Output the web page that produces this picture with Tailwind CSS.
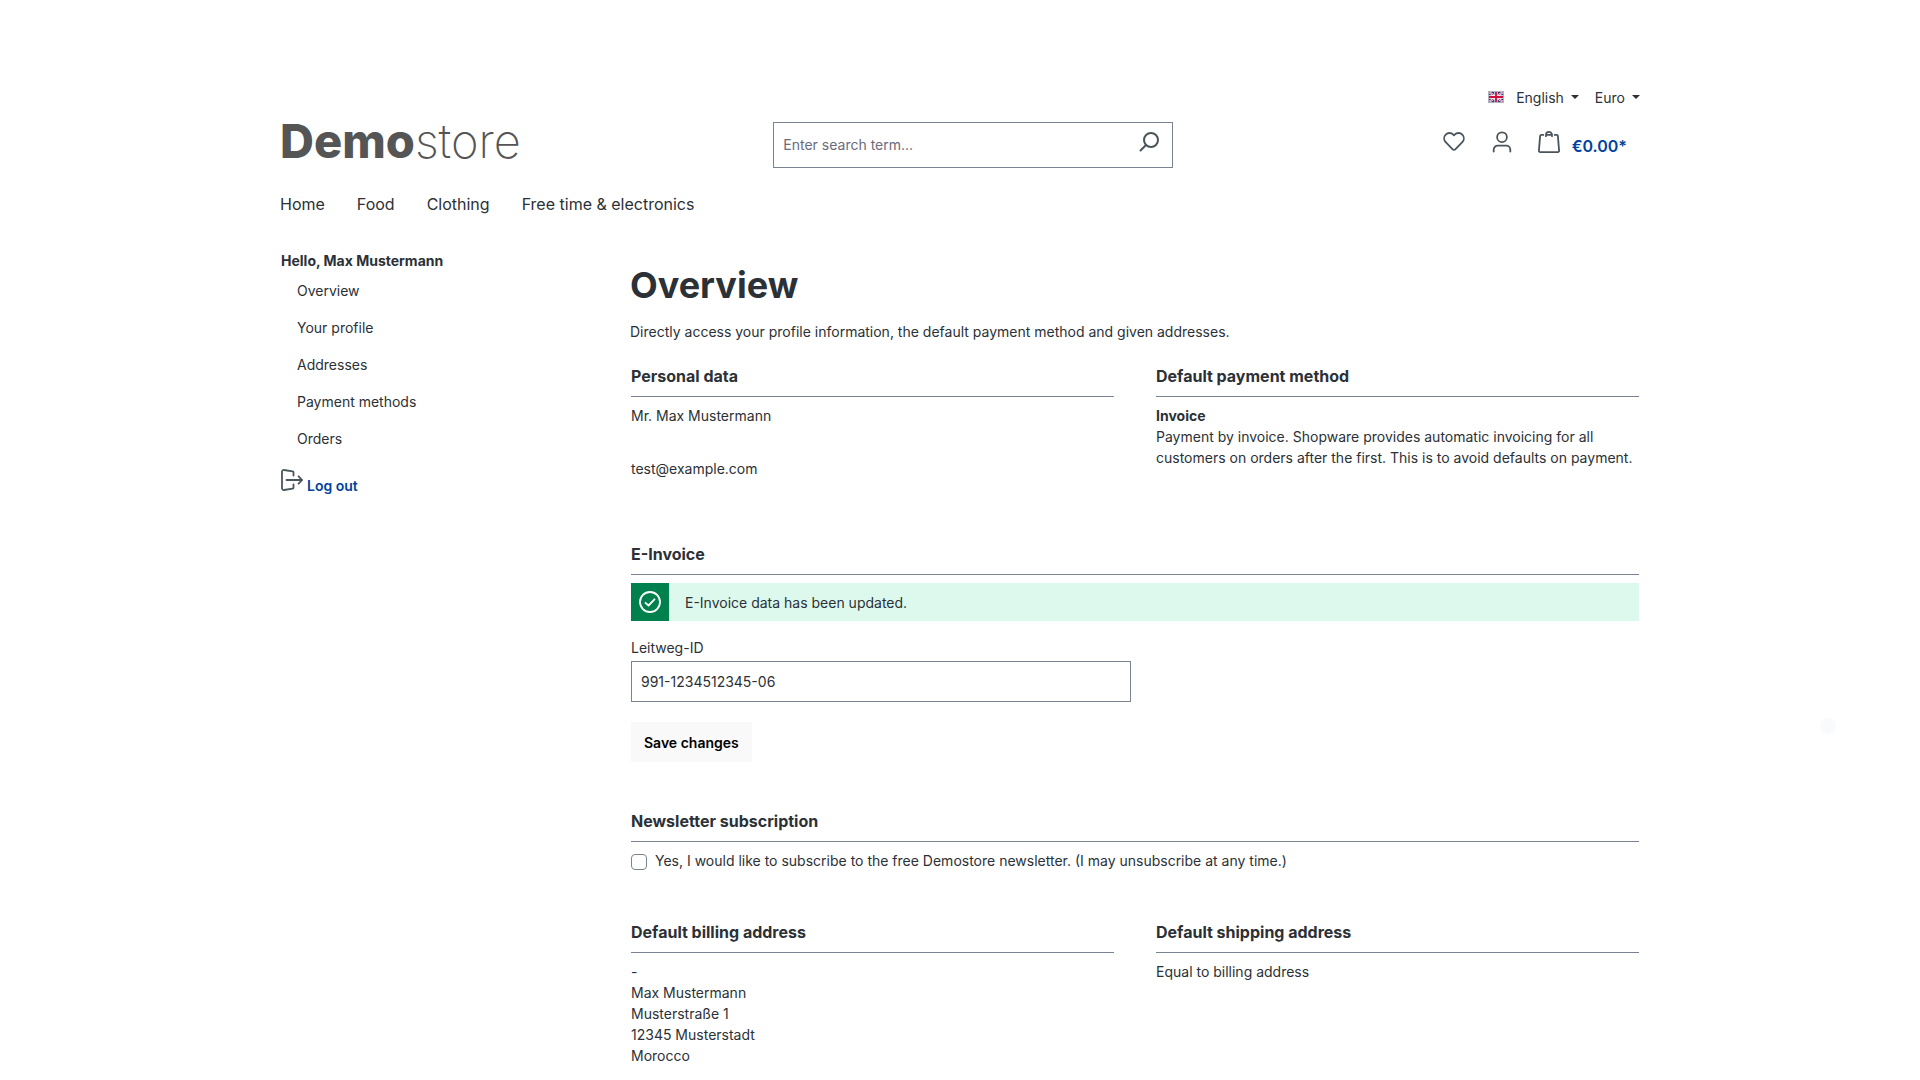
<!DOCTYPE html>
<html lang="en-GB">
<head>
    <meta charset="UTF-8">
    <meta name="viewport" content="width=device-width, initial-scale=1.0">
    <title>Overview | Demostore</title>
    <script src="https://cdn.jsdelivr.net/npm/@tailwindcss/browser@4"></script>
</head>
<body class="min-h-screen overflow-x-hidden bg-white font-['Inter',sans-serif] text-sm leading-[21px] text-[#2b3136]">
    <div class="max-w-[1400px] mx-auto px-5 pt-20">
        <header>
            <!-- Top bar -->
            <div class="flex justify-end items-center gap-4 h-[34px]">
                <div class="flex items-center gap-3">
                    <svg class="w-4 h-3 border border-[#b0b4ba]" viewBox="0 0 60 40" preserveAspectRatio="none" aria-hidden="true">
                        <path fill="#22408c" d="M0 0h60v40H0z"/>
                        <path stroke="#fff" stroke-width="8" d="M0 0l60 40M60 0L0 40"/>
                        <path stroke="#d0103a" stroke-width="3" d="M0 0l60 40M60 0L0 40"/>
                        <path stroke="#fff" stroke-width="14" d="M30 0v40M0 20h60"/>
                        <path stroke="#d0103a" stroke-width="8" d="M30 0v40M0 20h60"/>
                    </svg>
                    <div class="relative">
                        <select aria-label="Language" class="block appearance-none field-sizing-content bg-transparent pr-[15px] cursor-pointer">
                            <option selected>English</option>
                            <option>Deutsch</option>
                        </select>
                        <svg class="absolute right-0 top-2 w-2 h-1 pointer-events-none" viewBox="0 0 8 4" fill="currentColor" aria-hidden="true"><path d="M0 0h8L4 4z"/></svg>
                    </div>
                </div>
                <div class="relative">
                    <select aria-label="Currency" class="block appearance-none field-sizing-content bg-transparent pr-[15px] cursor-pointer">
                        <option selected>Euro</option>
                        <option>Pound</option>
                    </select>
                    <svg class="absolute right-0 top-2 w-2 h-1 pointer-events-none" viewBox="0 0 8 4" fill="currentColor" aria-hidden="true"><path d="M0 0h8L4 4z"/></svg>
                </div>
            </div>

            <!-- Logo, search and actions -->
            <div class="flex items-start pt-1.5">
                <a href="#" class="w-1/3 text-[47px] leading-[42px] text-[#555]"><span class="font-extrabold">Demo</span><span class="font-extralight">store</span></a>
                <form class="flex w-[400px] h-[46px] mt-0.5 ml-10 border border-[#798490]">
                    <input type="search" aria-label="Enter search term" placeholder="Enter search term..." class="grow min-w-0 px-[9px] pb-0.5 outline-none placeholder:text-[#6b6b7b]">
                    <button type="submit" aria-label="Search" class="px-3 pb-1.5 text-[#4a545b]">
                        <svg class="w-[22px] h-[22px]" viewBox="0 0 22 22" fill="none" stroke="currentColor" stroke-width="2" stroke-linecap="round" aria-hidden="true">
                            <circle cx="13" cy="9" r="7"/>
                            <path d="M8 14l-5.5 5.5"/>
                        </svg>
                    </button>
                </form>
                <div class="flex items-center ml-auto pt-1.5 pr-[13px] text-[#4a545b]">
                    <a href="#" aria-label="Wishlist" class="px-[13px]">
                        <svg class="w-[22px] h-[22px]" viewBox="0 0 22 22" fill="none" stroke="currentColor" stroke-width="1.8" stroke-linejoin="round" aria-hidden="true">
                            <path d="M11 4.4l-.7-.7A5.1 5.1 0 0 0 2.700 3.700 5.400 5.400 0 0 0 2.700 11.200l7 7.100a1.800 1.800 0 0 0 2.600 0l7-7.100a5.400 5.400 0 0 0 0-7.500 5.100 5.100 0 0 0-7.600 0z"/>
                        </svg>
                    </a>
                    <a href="#" aria-label="Your account" class="px-[13px]">
                        <svg class="w-[22px] h-[22px]" viewBox="0 0 22 22" fill="none" stroke="currentColor" stroke-width="1.8" stroke-linecap="round" aria-hidden="true">
                            <circle cx="11" cy="6.200" r="4.900"/>
                            <path d="M2.700 20.500v-1.800a4 4 0 0 1 4-4h8.600a4 4 0 0 1 4 4v1.800"/>
                        </svg>
                    </a>
                    <a href="#" aria-label="Shopping cart" class="flex items-center gap-3 pl-3">
                        <svg class="w-[22px] h-[22px]" viewBox="0 0 22 22" fill="none" stroke="currentColor" stroke-width="1.800" stroke-linecap="round" stroke-linejoin="round" aria-hidden="true">
                            <path d="M5.300 3.900H3.400a1.300 1.300 0 0 0-1.300 1.200L.9 19.700a1.300 1.300 0 0 0 1.300 1.400h17.600a1.300 1.300 0 0 0 1.300-1.400L19.900 5.100a1.300 1.300 0 0 0-1.300-1.200h-1.900M9 3.900h4.200M8 5.200V3.900a3 3 0 0 1 6 0v1.300"/>
                        </svg>
                        <span class="pt-2 text-base font-semibold text-[#0042a0]">€0.00*</span>
                    </a>
                </div>
            </div>

            <nav class="flex gap-8 pt-6 text-base">
                <a href="#">Home</a>
                <a href="#">Food</a>
                <a href="#">Clothing</a>
                <a href="#">Free time &amp; electronics</a>
            </nav>
        </header>

        <div class="flex pt-8">
            <!-- Account menu -->
            <aside class="w-[350px] shrink-0 pt-0.5 pl-px">
                <p class="pb-px font-bold">Hello, Max Mustermann</p>
                <nav class="flex flex-col">
                    <a href="#" class="px-4 py-2">Overview</a>
                    <a href="#" class="px-4 py-2">Your profile</a>
                    <a href="#" class="px-4 py-2">Addresses</a>
                    <a href="#" class="px-4 py-2">Payment methods</a>
                    <a href="#" class="px-4 py-2">Orders</a>
                </nav>
                <a href="#" class="flex items-center gap-1 pt-1.5 font-semibold text-[#0042a0]">
                    <svg class="w-[22px] h-[22px] text-[#4a545b]" viewBox="0 0 22 22" fill="none" stroke="currentColor" stroke-width="1.800" stroke-linecap="round" stroke-linejoin="round" aria-hidden="true">
                        <path d="M12.500 6.500V3.300a1 1 0 0 0-.9-1L3 1a1.700 1.700 0 0 0-2 1.700v16.600A1.700 1.700 0 0 0 3 21l8.600-1.300a1 1 0 0 0 .9-1v-3.200M5.500 11h15.600M17.600 7.300l3.500 3.700-3.500 3.700"/>
                    </svg>
                    <span class="pt-3">Log out</span>
                </a>
            </aside>

            <main class="grow min-w-0">
                <h1 class="pt-[15px] text-4xl leading-[44px] font-bold">Overview</h1>
                <p class="pt-3.5">Directly access your profile information, the default payment method and given addresses.</p>

                <div class="grid grid-cols-2 gap-10 pt-[22px]">
                    <section class="px-px">
                        <h2 class="pb-2 border-b border-[#798490] text-base font-bold">Personal data</h2>
                        <p class="pt-2">Mr. Max Mustermann</p>
                        <p class="pt-8">test@example.com</p>
                    </section>
                    <section class="px-px">
                        <h2 class="pb-2 border-b border-[#798490] text-base font-bold">Default payment method</h2>
                        <p class="pt-2"><strong>Invoice</strong><br>Payment by invoice. Shopware provides automatic invoicing for all customers on orders after the first. This is to avoid defaults on payment.</p>
                    </section>
                </div>

                <section class="px-px pt-[63px]">
                    <h2 class="pb-2 border-b border-[#798490] text-base font-bold">E-Invoice</h2>
                    <div role="alert" class="flex items-center mt-2 bg-[#ddf9ee]">
                        <span class="p-2 bg-[#00804d] text-white">
                            <svg class="w-[22px] h-[22px]" viewBox="0 0 22 22" fill="none" stroke="currentColor" stroke-width="1.800" stroke-linecap="round" stroke-linejoin="round" aria-hidden="true">
                                <circle cx="11" cy="11" r="10"/>
                                <path d="M6.500 11.800l3 2.700 6-6.200"/>
                            </svg>
                        </span>
                        <span class="px-4">E-Invoice data has been updated.</span>
                    </div>
                    <form>
                        <label for="leitweg" class="block pt-4 pb-[3px]">Leitweg-ID</label>
                        <input type="text" id="leitweg" value="991-1234512345-06" class="block w-full max-w-[500px] h-[41px] px-[9px] border border-[#798490]">
                        <button type="submit" class="h-10 mt-5 px-[13px] bg-[#f9f9f9] font-semibold text-black">Save changes</button>
                    </form>
                </section>

                <section class="px-px pt-[47px]">
                    <h2 class="pb-2 border-b border-[#798490] text-base font-bold">Newsletter subscription</h2>
                    <div class="flex items-center gap-2 pt-2">
                        <input type="checkbox" id="newsletter" class="appearance-none w-4 h-4 mt-0.5 border border-[#798490] rounded checked:bg-[#0042a0]">
                        <label for="newsletter">Yes, I would like to subscribe to the free Demostore newsletter. (I may unsubscribe at any time.)</label>
                    </div>
                </section>

                <div class="grid grid-cols-2 gap-10 pt-[49px]">
                    <section class="px-px">
                        <h2 class="pb-2 border-b border-[#798490] text-base font-bold">Default billing address</h2>
                        <address class="pt-2 not-italic">
                            -<br>
                            Max Mustermann<br>
                            Musterstraße 1<br>
                            12345 Musterstadt<br>
                            Morocco
                        </address>
                    </section>
                    <section class="px-px">
                        <h2 class="pb-2 border-b border-[#798490] text-base font-bold">Default shipping address</h2>
                        <p class="pt-2">Equal to billing address</p>
                    </section>
                </div>
            </main>
        </div>
    </div>

    <!-- Scroll up indicator, still fading in -->
    <div class="fixed right-[84px] bottom-[346px] w-4 h-4 rounded-full bg-[#f8fafc]"></div>
</body>
</html>
